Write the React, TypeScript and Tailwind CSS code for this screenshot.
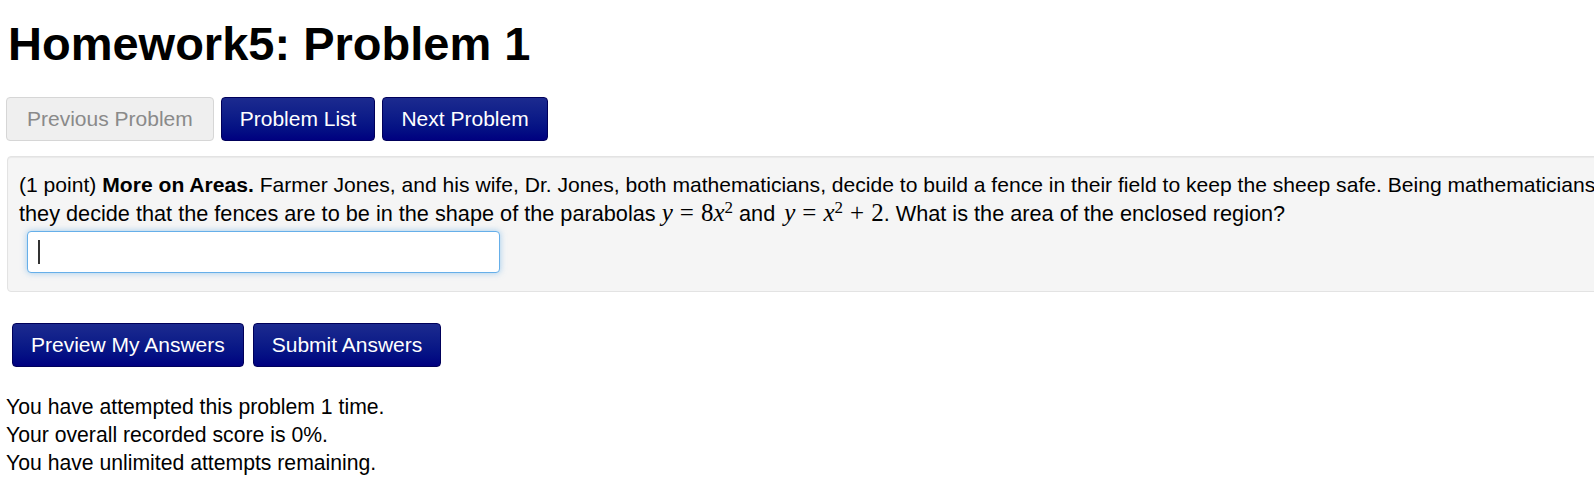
import React from "react";

const sans = "font-['Helvetica','Liberation_Sans',Arial,sans-serif]";

function NavButton({ label, disabled }: { label: string; disabled?: boolean }) {
  if (disabled) {
    return (
      <button className="h-[44px] rounded-[4px] border border-[#d6d6d6] bg-[#efefef] px-[20px] text-[21px] text-[#8a8a8a]">
        {label}
      </button>
    );
  }
  return (
    <button className="h-[44px] rounded-[4px] border border-[#00005a] bg-gradient-to-b from-[#1c2a8f] to-[#000080] px-[18px] text-[21px] text-white">
      {label}
    </button>
  );
}

const mathFont = "font-['Liberation_Serif',serif] text-[25px]";

export default function App() {
  return (
    <div className={`h-[504px] w-[1594px] overflow-hidden bg-white text-black ${sans}`}>
      <h1 className="pl-[8px] pt-[19px] text-[47px] font-bold leading-[50px]">Homework5: Problem 1</h1>

      <div className="mt-[28px] flex gap-[7px] pl-[6px]">
        <NavButton label="Previous Problem" disabled />
        <NavButton label="Problem List" />
        <NavButton label="Next Problem" />
      </div>

      <div className="ml-[7px] mt-[15px] w-[1640px] rounded-[4px] border border-[#e3e3e3] bg-[#f5f5f5] px-[11px] pb-[18px] pt-[14px] leading-[28px] shadow-[inset_0_1px_1px_rgba(0,0,0,0.05)]">
        <p className="whitespace-nowrap text-[21.1px]">
          (1 point) <b>More on Areas.</b> Farmer Jones, and his wife, Dr. Jones, both mathematicians, decide to build a
          fence in their field to keep the sheep safe. Being mathematicians,
        </p>
        <p className="whitespace-nowrap text-[21.7px]">
          they decide that the fences are to be in the shape of the parabolas{" "}
          <span className={mathFont}>
            <i>y</i>
            <span className="mx-[7px]">=</span>8<i>x</i>
            <sup className="text-[17px]">2</sup>
          </span>{" "}
          and{" "}
          <span className={`${mathFont} ml-[3px]`}>
            <i>y</i>
            <span className="mx-[7px]">=</span>
            <i>x</i>
            <sup className="text-[17px]">2</sup>
            <span className="mx-[7px]">+</span>2
          </span>
          . What is the area of the enclosed region?
        </p>
        <div className="ml-[8px] mt-[3px] flex h-[42px] w-[473px] items-center rounded-[4px] border border-[#66afe9] bg-white px-[10px] shadow-[0_0_6px_rgba(102,175,233,0.6)]">
          <span className="h-[24px] w-[1.5px] bg-[#333]" />
        </div>
      </div>

      <div className="mt-[31px] flex gap-[9px] pl-[12px]">
        <NavButton label="Preview My Answers" />
        <NavButton label="Submit Answers" />
      </div>

      <div className="mt-[26px] pl-[6px] text-[21.2px] leading-[28px]">
        <div>You have attempted this problem 1 time.</div>
        <div>Your overall recorded score is 0%.</div>
        <div>You have unlimited attempts remaining.</div>
      </div>
    </div>
  );
}
